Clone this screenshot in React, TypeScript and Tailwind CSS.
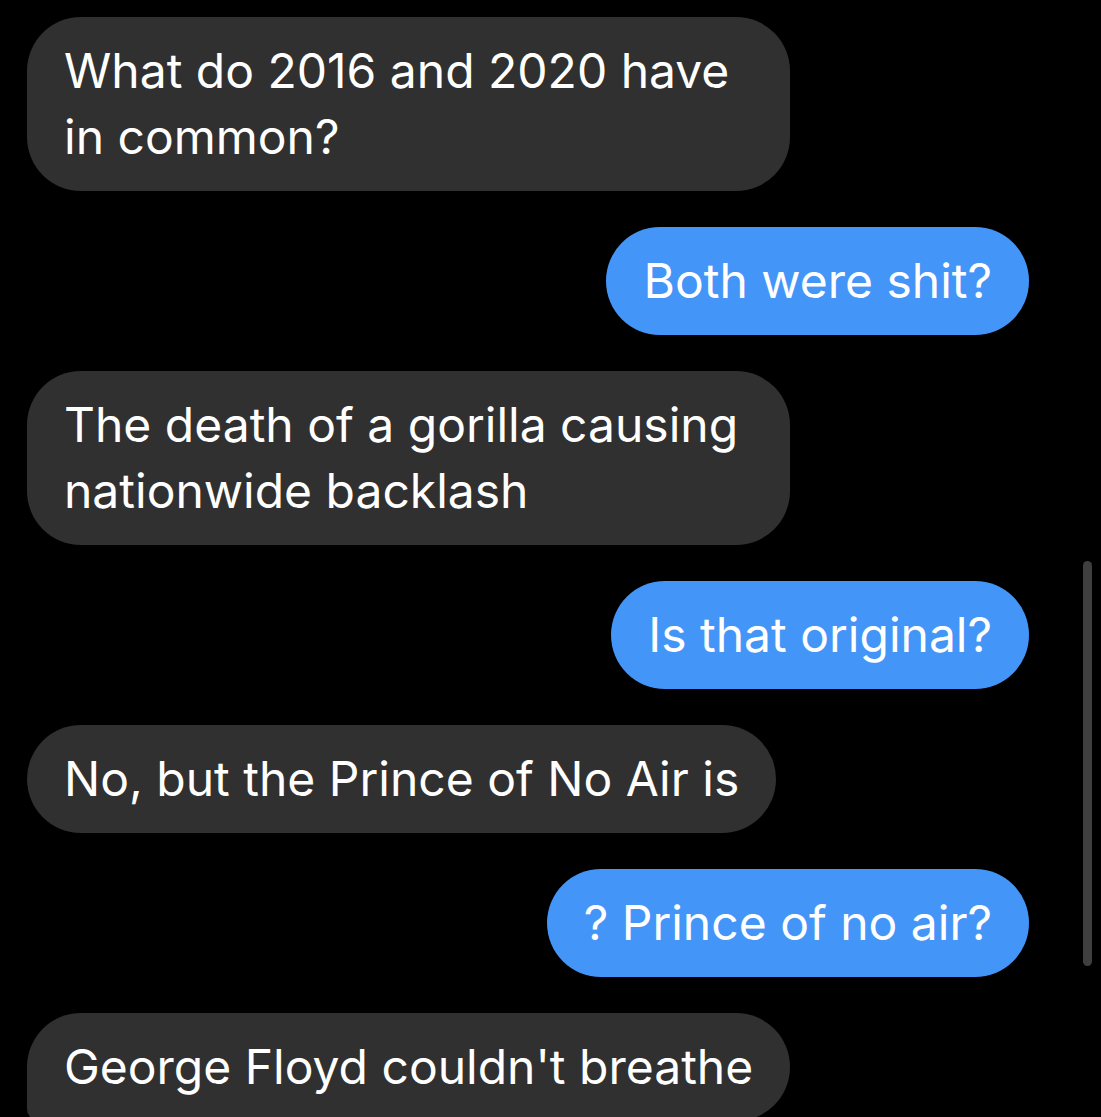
type Message = { from: "them" | "me"; text: string; continues?: boolean };

const messages: Message[] = [
  { from: "them", text: "What do 2016 and 2020 have in common?" },
  { from: "me", text: "Both were shit?" },
  { from: "them", text: "The death of a gorilla causing nationwide backlash" },
  { from: "me", text: "Is that original?" },
  { from: "them", text: "No, but the Prince of No Air is" },
  { from: "me", text: "? Prince of no air?" },
  { from: "them", text: "George Floyd couldn't breathe", continues: true },
];

function Bubble({ message }: { message: Message }) {
  const side = message.from === "me" ? "self-end bg-[#4495f8]" : "self-start bg-[#303030]";
  const shape = message.continues
    ? "max-w-[780px] rounded-t-[54px] rounded-br-[54px] rounded-bl-xl"
    : "max-w-[763px] rounded-[54px]";
  return (
    <li className={`px-[37px] py-[21px] text-[48px] leading-[66px] text-white ${shape} ${side}`}>
      {message.text}
    </li>
  );
}

export default function App() {
  return (
    <main className="relative h-screen overflow-hidden bg-black font-['Inter',sans-serif]">
      <ul className="flex flex-col gap-9 pt-[17px] pr-[72px] pl-[27px]">
        {messages.map((message) => (
          <Bubble key={message.text} message={message} />
        ))}
      </ul>
      <div aria-hidden="true" className="absolute top-[561px] right-[9px] h-[405px] w-[9px] rounded-full bg-[#3f3f3f]" />
    </main>
  );
}
